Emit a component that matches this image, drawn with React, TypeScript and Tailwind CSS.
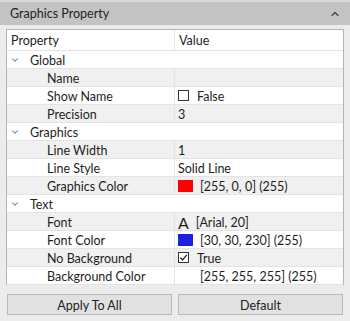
import { ChevronDown, ChevronUp } from "lucide-react";

type Row =
  | { kind: "group"; label: string }
  | { kind: "prop"; label: string; icon?: React.ReactNode; value: string; shade: boolean };

const Swatch = ({ color }: { color: string }) => (
  <span className="inline-block w-[15px] h-[12px] mr-[7px]" style={{ backgroundColor: color }} />
);

const Check = ({ checked }: { checked: boolean }) => (
  <span className="inline-flex items-center justify-center w-[11px] h-[11px] border border-[#333] bg-white mr-[8px]">
    {checked && (
      <svg width="9" height="9" viewBox="0 0 9 9">
        <path d="M1.2 4.6 L3.5 7 L7.8 1.8" fill="none" stroke="#222" strokeWidth="1.2" />
      </svg>
    )}
  </span>
);

const rows: Row[] = [
  { kind: "group", label: "Global" },
  { kind: "prop", label: "Name", value: "", shade: true },
  { kind: "prop", label: "Show Name", icon: <Check checked={false} />, value: "False", shade: false },
  { kind: "prop", label: "Precision", value: "3", shade: true },
  { kind: "group", label: "Graphics" },
  { kind: "prop", label: "Line Width", value: "1", shade: true },
  { kind: "prop", label: "Line Style", value: "Solid Line", shade: false },
  { kind: "prop", label: "Graphics Color", icon: <Swatch color="#ff0000" />, value: "[255, 0, 0] (255)", shade: true },
  { kind: "group", label: "Text" },
  {
    kind: "prop",
    label: "Font",
    icon: <span className="text-[16px] leading-none mr-[7px] pt-[2px] text-[#222]">A</span>,
    value: "[Arial, 20]",
    shade: true,
  },
  { kind: "prop", label: "Font Color", icon: <Swatch color="#1e1ee6" />, value: "[30, 30, 230] (255)", shade: false },
  { kind: "prop", label: "No Background", icon: <Check checked={true} />, value: "True", shade: true },
  {
    kind: "prop",
    label: "Background Color",
    icon: <span className="inline-block w-[15px] mr-[7px]" />,
    value: "[255, 255, 255] (255)",
    shade: false,
  },
];

export default function App() {
  return (
    <div
      className="w-[350px] h-[321px] bg-[#ececec] flex flex-col text-[12.5px] text-[#1e1e1e]"
      style={{ fontFamily: 'Lato, "Noto Sans", sans-serif' }}
    >
      <div className="h-[25px] bg-[#c3c3c3] border-t-2 border-[#d8d8d8] flex items-center justify-between pl-[10px] pr-[9px] pt-[2px]">
        <span className="text-[#222]">Graphics Property</span>
        <ChevronUp size={12} strokeWidth={2.5} className="text-[#444] -mt-[2px]" />
      </div>
      <div className="mx-[6px] mt-[4px] h-[256px] bg-white border border-[#b4b4b4] flex flex-col">
        <div className="h-[21px] flex items-center border-b border-[#e3e3e3]">
          <div className="w-[168px] pl-[4px] border-r border-[#e3e3e3] h-full flex items-center pt-[2px]">Property</div>
          <div className="pl-[4px] pt-[2px]">Value</div>
        </div>
        {rows.map((r, i) =>
          r.kind === "group" ? (
            <div key={i} className="h-[18px] flex items-center bg-white border-b border-[#e3e3e3]">
              <ChevronDown size={10} strokeWidth={2} className="ml-[3px] mr-[10px] text-[#333]" />
              <span className="pt-[4px]">{r.label}</span>
            </div>
          ) : (
            <div
              key={i}
              className={`h-[18px] flex items-center border-b border-[#e3e3e3] ${r.shade ? "bg-[#f0f0f0]" : "bg-white"}`}
            >
              <div className="w-[168px] pl-[40px] pt-[4px] h-full flex items-center border-r border-[#e3e3e3]">{r.label}</div>
              <div className="pl-[3px] flex items-center">
                {r.icon}
                <span className="pt-[4px]">{r.value}</span>
              </div>
            </div>
          )
        )}
      </div>
      <div className="flex gap-[6px] mx-[7px] mt-[9px]">
        <button className="flex-1 h-[21px] pt-[2px] bg-[#e1e1e1] border border-[#b9b9b9] text-[12.5px] text-[#222]">Apply To All</button>
        <button className="flex-1 h-[21px] pt-[2px] bg-[#e1e1e1] border border-[#b9b9b9] text-[12.5px] text-[#222]">Default</button>
      </div>
    </div>
  );
}
